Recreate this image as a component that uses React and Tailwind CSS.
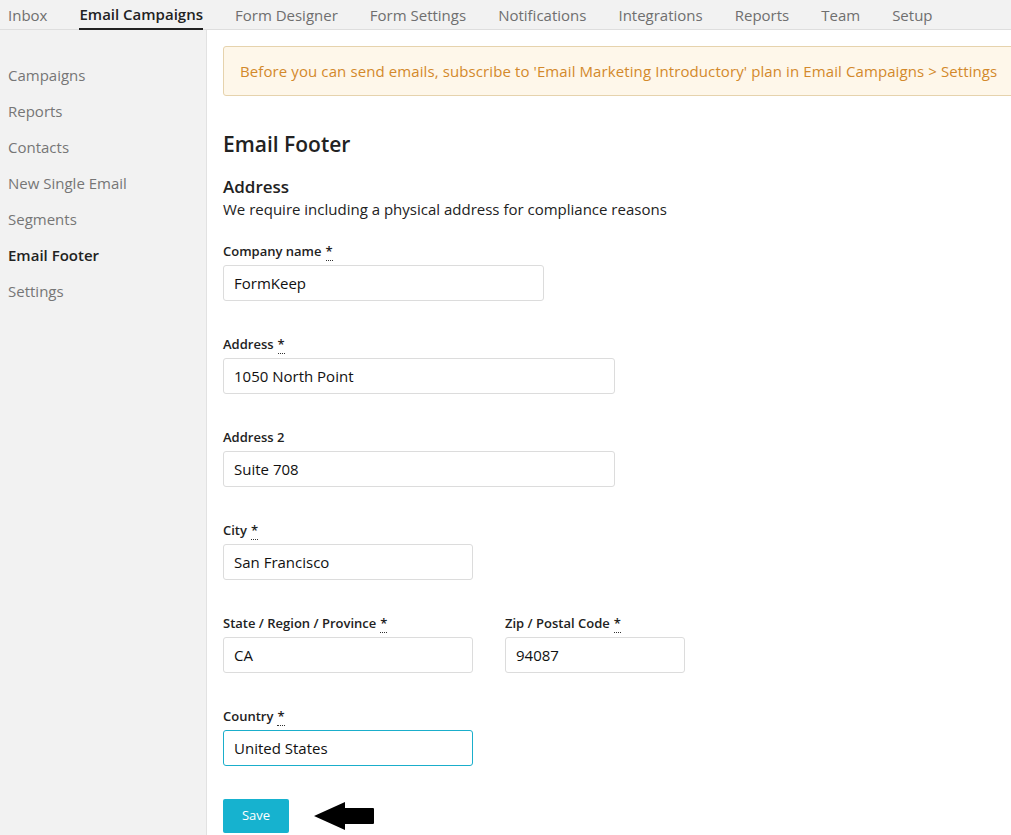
import React from "react";

const tabs = ["Inbox", "Email Campaigns", "Form Designer", "Form Settings", "Notifications", "Integrations", "Reports", "Team", "Setup"];
const side = ["Campaigns", "Reports", "Contacts", "New Single Email", "Segments", "Email Footer", "Settings"];

function Label({ text, req }) {
    return (
        <label className="block text-[13px] font-semibold text-[#222] leading-[18px] mb-[5px]">
            {text}
            {req && (
                <abbr title="required" className="ml-1 no-underline border-b border-dotted border-[#333]">*</abbr>
            )}
        </label>
    );
}

function Field({ label, value, width, req, focus }) {
    return (
        <div className="mb-[34px]">
            <Label text={label} req={req} />
            <input
                readOnly
                value={value}
                className={`${width} h-[36px] rounded-[3px] border px-[10px] text-[15px] text-[#111] outline-none ${focus ? "border-[#1aaecb]" : "border-[#dcdcdc]"}`}
            />
        </div>
    );
}

export default function App() {
    return (
        <div className="w-[1011px] h-[835px] overflow-hidden bg-white text-[#222]" style={{ fontFamily: '"Open Sans", "Noto Sans", sans-serif' }}>
            {/* Top tabs */}
            <div className="h-[30px] bg-[#f2f2f2] border-b border-[#dedede] flex items-end pl-[8px] gap-x-[32px]">
                {tabs.map((t) => (
                    <div
                        key={t}
                        className={`text-[15px] leading-[28px] ${t === "Email Campaigns" ? "font-semibold text-[#222] border-b-2 border-[#222] -mb-px" : "text-[#6f6f6f]"}`}
                    >
                        {t}
                    </div>
                ))}
            </div>

            <div className="flex h-[805px]">
                {/* Sidebar */}
                <div className="w-[207px] shrink-0 bg-[#f2f2f2] border-r border-[#e2e2e2] pt-[34px]">
                    {side.map((s) => (
                        <div
                            key={s}
                            className={`pl-[8px] h-[36px] leading-[22px] text-[15px] ${s === "Email Footer" ? "font-semibold text-[#222]" : "text-[#767676]"}`}
                        >
                            {s}
                        </div>
                    ))}
                </div>

                {/* Main */}
                <div className="flex-1 min-w-0 pl-[16px] pt-[16px]">
                    <div className="h-[50px] w-[820px] rounded-[3px] border border-[#e6d3ad] bg-[#fef7ea] flex items-center pl-[16px] text-[15px] tracking-[0.1px] text-[#d3892b] whitespace-nowrap">
                        Before you can send emails, subscribe to 'Email Marketing Introductory' plan in Email Campaigns &gt; Settings
                    </div>

                    <h1 className="mt-[33px] text-[21px] font-semibold leading-[30px] text-[#222]">Email Footer</h1>

                    <h2 className="mt-[17px] text-[17px] font-semibold leading-[22px] text-[#222]">Address</h2>
                    <p className="text-[15px] leading-[22px] text-[#222]">We require including a physical address for compliance reasons</p>

                    <div className="mt-[22px]">
                        <Field label="Company name" value="FormKeep" width="w-[321px]" req />
                        <Field label="Address" value="1050 North Point" width="w-[392px]" req />
                        <Field label="Address 2" value="Suite 708" width="w-[392px]" />
                        <Field label="City" value="San Francisco" width="w-[250px]" req />
                        <div className="flex gap-x-[32px]">
                            <Field label="State / Region / Province" value="CA" width="w-[250px]" req />
                            <Field label="Zip / Postal Code" value="94087" width="w-[180px]" req />
                        </div>
                        <Field label="Country" value="United States" width="w-[250px]" req focus />
                    </div>

                    <div className="flex items-center -mt-[1px]">
                        <button className="w-[66px] h-[34px] rounded-[2px] bg-[#16b2cf] text-white text-[13px]">Save</button>
                        <svg width="62" height="30" viewBox="0 0 62 30" className="ml-[24px]">
                            <path d="M1 15 L32 1 L32 7 L60 7 Q61 7 61 8 L61 22 Q61 23 60 23 L32 23 L32 29 Z" fill="#000" />
                        </svg>
                    </div>
                </div>
            </div>
        </div>
    );
}
